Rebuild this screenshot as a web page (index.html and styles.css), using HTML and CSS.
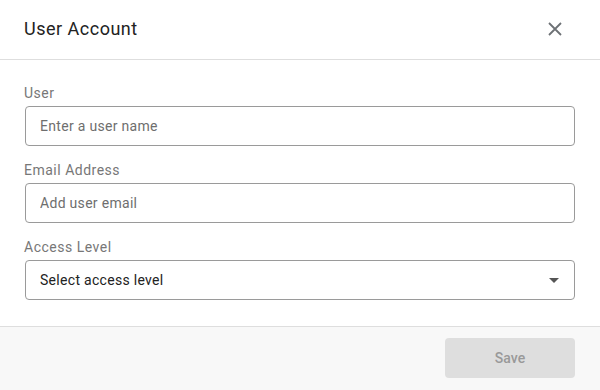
FILE: index.html
```html
<!DOCTYPE html>
<html lang="en">
<head>
  <meta charset="UTF-8">
  <title>User Account</title>
  <link rel="stylesheet" href="styles.css">
</head>
<body>
  <div class="dialog">
    <!-- Header -->
    <div class="dialog-header">
      <h1 class="title">User Account</h1>
      <button class="close-btn" aria-label="Close">
        <svg width="14" height="14" viewBox="0 0 14 14">
          <path d="M1 1 L13 13 M13 1 L1 13" stroke="#6d7175" stroke-width="1.8" fill="none"/>
        </svg>
      </button>
    </div>
    <!-- Form -->
    <form class="dialog-body">
      <div class="field">
        <label for="user">User</label>
        <input id="user" type="text" placeholder="Enter a user name">
      </div>
      <div class="field">
        <label for="email">Email Address</label>
        <input id="email" type="email" placeholder="Add user email">
      </div>
      <div class="field">
        <label for="access">Access Level</label>
        <div class="select">
          <span>Select access level</span>
          <span class="caret"></span>
        </div>
      </div>
    </form>
    <!-- Footer -->
    <div class="dialog-footer">
      <button class="save-btn" disabled>Save</button>
    </div>
  </div>
</body>
</html>
```

FILE: styles.css
```css
* {
  margin: 0;
  padding: 0;
  box-sizing: border-box;
}
body {
  font-family: Roboto, 'Liberation Sans', sans-serif;
  background: #fff;
  color: #222;
  width: 600px;
  height: 390px;
  overflow: hidden;
}
.dialog {
  display: flex;
  flex-direction: column;
  height: 390px;
}
/* Header */
.dialog-header {
  height: 60px;
  display: flex;
  align-items: center;
  justify-content: space-between;
  padding: 0 24px 2px 24px;
  border-bottom: 1px solid #dedede;
}
.title {
  font-size: 18px;
  font-weight: 400;
  letter-spacing: 0.5px;
  color: #222;
}
.close-btn {
  background: none;
  border: none;
  width: 14px;
  height: 14px;
  margin-right: 14px;
  display: flex;
  cursor: pointer;
}
/* Body */
.dialog-body {
  padding: 23px 25px 26px 25px;
  display: flex;
  flex-direction: column;
  gap: 14px;
}
.field label {
  display: block;
  font-size: 14px;
  line-height: 20px;
  letter-spacing: 0.5px;
  color: #777;
  margin-bottom: 3px;
  margin-left: -1px;
}
.field input,
.select {
  width: 100%;
  height: 40px;
  border: 1px solid #9a9a9a;
  border-radius: 4px;
  padding: 0 14px;
  font-family: inherit;
  font-size: 14px;
  letter-spacing: 0.3px;
  color: #222;
  outline: none;
}
.field input::placeholder {
  color: #6e6e6e;
}
.select {
  display: flex;
  align-items: center;
  justify-content: space-between;
}
.caret {
  width: 0;
  height: 0;
  border-left: 5px solid transparent;
  border-right: 5px solid transparent;
  border-top: 5px solid #555;
  margin-right: 1px;
}
/* Footer */
.dialog-footer {
  flex: 1;
  background: #f8f8f8;
  border-top: 1px solid #dedede;
  display: flex;
  justify-content: flex-end;
  align-items: flex-start;
  padding: 11px 25px 0 0;
}
.save-btn {
  width: 130px;
  height: 40px;
  border: none;
  border-radius: 4px;
  background: #dedede;
  color: #999;
  font-family: inherit;
  font-size: 14px;
  font-weight: 500;
}
```
